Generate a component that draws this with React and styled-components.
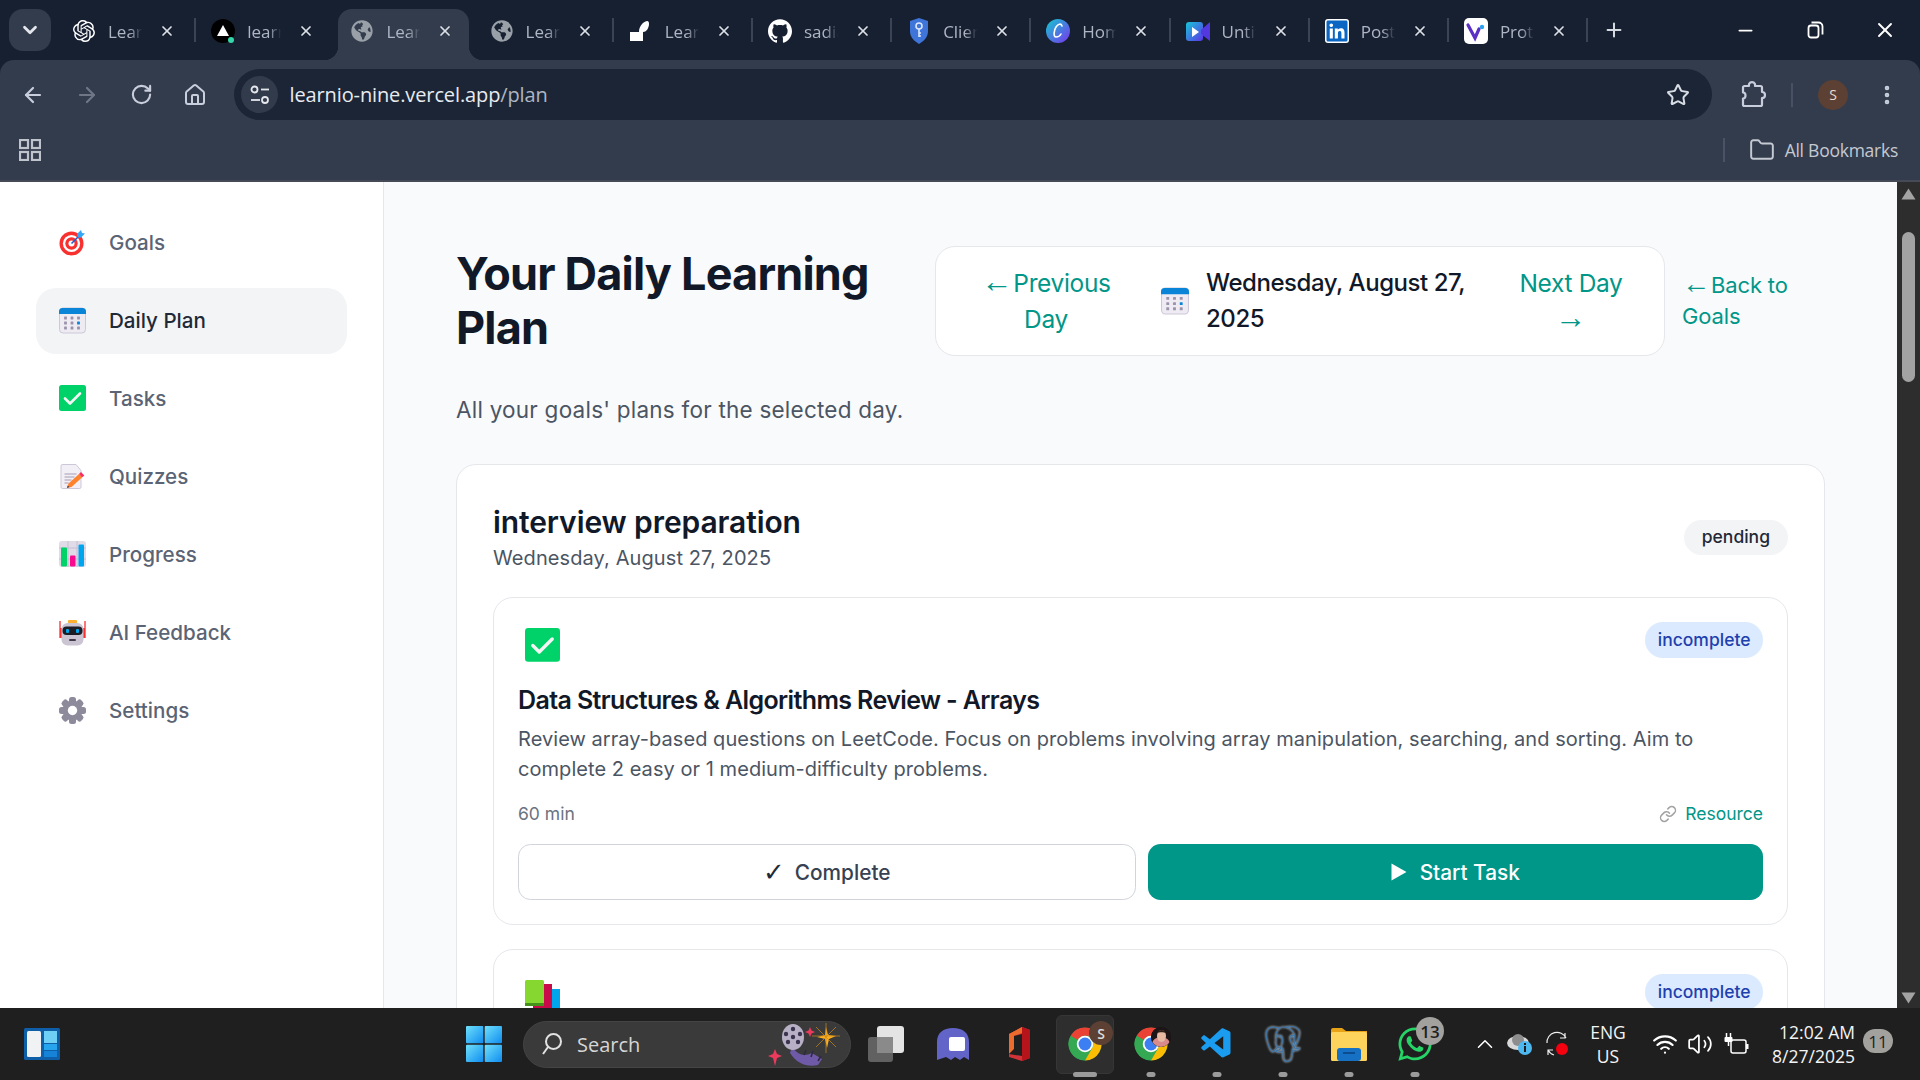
import React from "react";
import styled, { createGlobalStyle } from "styled-components";
import { ArrowLeft, ArrowRight, RotateCw, House, Star, EllipsisVertical, Folder, Plus, X, Minus, ChevronDown, Link as LinkIcon, ChevronUp, Wifi, Volume2 } from "lucide-react";
import { SiOpenai, SiGithub, SiPostgresql } from "react-icons/si";
import { FaGlobeAmericas, FaWhatsapp, FaLinkedin } from "react-icons/fa";
import { VscVscode } from "react-icons/vsc";

const UI = `"Inter", "Noto Sans", sans-serif`;
const SYS = `"Open Sans", "Noto Sans", sans-serif`;
const TEAL = "#009688";

const Global = createGlobalStyle`
  html, body { margin: 0; padding: 0; overflow: hidden; background: #fff; }
  * { box-sizing: border-box; }
  #root { height: 1080px; }
`;

const Screen = styled.div`
  width: 1920px; height: 1080px; display: flex; flex-direction: column; overflow: hidden; font-family: ${UI};
`;

const TabStrip = styled.div`
  height: 60px; flex: none; background: #172031; display: flex; align-items: flex-start; padding-left: 9px; font-family: ${SYS};
`;
const TabMenu = styled.div`
  width: 42px; height: 42px; margin: 9px 9px 0 0; border-radius: 14px; background: #333c4d; color: #e4e7ec;
  display: flex; align-items: center; justify-content: center;
`;
const Tab = styled.div`
  position: relative; width: ${p => (p.$active ? "131px" : "139.2px")}; margin-right: ${p => (p.$active ? "8.2px" : "0")};
  height: 51px; margin-top: 9px; padding: 0 0 7px 12px; display: flex; align-items: center; flex: none;
  background: ${p => (p.$active ? "#333c4d" : "transparent")}; border-radius: 14px 14px 0 0;
  ${p => p.$active && `
    &::before, &::after { content: ""; position: absolute; bottom: 0; width: 14px; height: 14px; }
    &::before { left: -14px; background: radial-gradient(circle at 0 0, transparent 14px, #333c4d 14.5px); }
    &::after { right: -14px; background: radial-gradient(circle at 100% 0, transparent 14px, #333c4d 14.5px); }
  `}
  ${p => p.$sep && `
    &::after { content: ""; position: absolute; right: 3px; top: 9px; width: 2px; height: 24px; background: #3b4455; }
  `}
`;
const FavSlot = styled.span`
  width: 24px; height: 24px; flex: none; display: flex; align-items: center; justify-content: center; position: relative;
`;
const TabTitle = styled.span`
  width: 36px; margin: 0 15px 0 12px; font-size: 17px; color: #aeb5c3; white-space: nowrap; overflow: hidden; flex: none;
  -webkit-mask-image: linear-gradient(90deg, #000 60%, transparent 95%); mask-image: linear-gradient(90deg, #000 60%, transparent 95%);
`;
const TabClose = styled(X)` color: #dde0e6; flex: none; `;
const NewTab = styled(Plus)` color: #d5d9e0; margin: 19px 0 0 12px; flex: none; `;
const WinControls = styled.div`
  margin-left: auto; display: flex; align-items: flex-start; color: #fff;
`;
const WinButton = styled.div`
  width: 70px; height: 60px; display: flex; align-items: center; justify-content: center;
`;

const Toolbar = styled.div`
  height: 60px; flex: none; background: #333c4d; border-radius: 14px 14px 0 0;
  display: flex; align-items: flex-start; padding: 9px 0 0 6px;
`;
const ToolStripBack = styled.div` background: #172031; flex: none; `;
const NavSlot = styled.div`
  width: 54px; height: 51px; flex: none; display: flex; align-items: center; justify-content: center;
  color: ${p => (p.$dim ? "#6f7787" : "#c8cedb")};
`;
const Omnibox = styled.div`
  width: 1478px; height: 51px; margin-left: 12px; background: #1b2536; border-radius: 26px; flex: none;
  display: flex; align-items: center; padding: 0 22px 0 7px; color: #fff; font-family: ${SYS}; font-size: 20px;
`;
const SiteChip = styled.div`
  width: 37px; height: 37px; border-radius: 50%; background: #323b4b; display: flex; align-items: center; justify-content: center; flex: none; margin-right: 11px;
`;
const UrlHost = styled.span` color: #e8ebf0; letter-spacing: -0.12px; margin-left: 0.5px; `;
const UrlPath = styled.span` color: #aeb5c3; letter-spacing: -0.12px; `;
const StarWrap = styled.div` margin-left: auto; color: #d8dce3; display: flex; `;
const ToolSlot = styled.div`
  width: ${p => p.$w}px; margin-left: ${p => p.$ml || 0}px; height: 51px; flex: none; display: flex; align-items: center; justify-content: center; color: #c8cedb;
`;
const ToolSep = styled.div` width: 2px; height: 24px; background: #485164; `;
const Avatar = styled.div`
  width: 30px; height: 30px; border-radius: 50%; background: #5c4033; color: #e8dcd5; font: 14px ${SYS}; display: flex; align-items: center; justify-content: center;
`;

const BookmarkBar = styled.div`
  height: 62px; flex: none; background: #333c4d; border-bottom: 2px solid #454a56; display: flex; align-items: center; padding: 0 22px 0 19px; color: #c5c9d2; font-family: ${SYS};
`;
const BarSep = styled.div` width: 2px; height: 24px; background: #4a5365; margin-left: auto; `;
const AllBookmarks = styled.span` font-size: 17.5px; margin-left: 10px; letter-spacing: -0.25px; `;
const FolderIcon = styled(Folder)` margin-left: 24px; `;

const Body = styled.div` flex: 1; min-height: 0; display: flex; `;
const Sidebar = styled.nav`
  width: 384px; flex: none; background: #fff; border-right: 1px solid #e5e7eb; padding: 28px 36px 0; display: flex; flex-direction: column; gap: 12px;
`;
const SideItem = styled.div`
  width: 311px; height: 66px; border-radius: 20px; padding-left: 23px; display: flex; align-items: center; gap: 23px;
  font-size: 20.6px; font-weight: 500; color: ${p => (p.$active ? "#1f2937" : "#5b6474")}; background: ${p => (p.$active ? "#f3f4f6" : "transparent")};
`;
const SideLabel = styled.span` margin-top: -2px; `;
const SideGlyph = styled.span` display: flex; margin-top: -1px; `;
const Main = styled.main`
  flex: 1; min-width: 0; background: #f9fafb; padding: 64px 72px 0; overflow: hidden;
`;
const Header = styled.header` display: flex; align-items: center; `;
const Title = styled.h1`
  width: 479px; flex: none; margin: 0; font-size: 45px; line-height: 54px; font-weight: 700; color: #111827; letter-spacing: -0.8px;
`;
const NavCard = styled.div`
  width: 730px; height: 110px; flex: none; background: #fff; border: 1px solid #e5e7eb; border-radius: 20px; padding: 0 24px;
  display: flex; align-items: center;
`;
const DayLink = styled.a`
  width: ${p => p.$w}px; padding: 0 ${p => p.$pad || 0}px; text-align: center; font-size: 24.5px; line-height: 36px; color: ${TEAL}; flex: none; letter-spacing: -0.35px;
`;
const Arrow = styled.span` font-family: "Liberation Sans", sans-serif; font-size: 1.28em; line-height: 1px; margin-right: 1px; `;
const DateBlock = styled.div`
  width: 315px; margin-left: 29px; margin-right: 24px; flex: none; display: flex; align-items: center; gap: 17px;
  font-size: 24px; line-height: 36px; font-weight: 500; color: #111827; letter-spacing: -0.45px;
  svg { flex: none; }
`;
const BackLink = styled.a`
  flex: 1; margin-left: 17px; font-size: 22px; line-height: 31px; color: ${TEAL}; letter-spacing: -0.15px;
`;
const Subtitle = styled.p` margin: 39px 0; font-size: 22.5px; line-height: 30px; color: #4b5563; letter-spacing: 0.23px; `;
const GoalCard = styled.section`
  background: #fff; border: 1px solid #e5e7eb; border-radius: 20px; padding: 37px 36px 36px;
`;
const GoalHead = styled.div` display: flex; align-items: center; justify-content: space-between; margin-bottom: 24px; `;
const GoalTitle = styled.h2` margin: 0; font-size: 30px; line-height: 40px; font-weight: 600; color: #111827; letter-spacing: -0.1px; `;
const GoalDate = styled.div` font-size: 20px; line-height: 30px; color: #4b5563; letter-spacing: 0.1px; margin-top: 1px; `;
const Pill = styled.span`
  height: ${p => p.$h}px; padding: 0 ${p => p.$px}px 2px; border-radius: 20px; font-size: 17.5px; font-weight: 500; display: inline-flex; align-items: center; flex: none;
  background: ${p => p.$bg}; color: ${p => p.$fg};
`;
const TaskCard = styled.article`
  background: #fff; border: 1px solid #e5e7eb; border-radius: 20px; padding: 24px; margin-bottom: 24px;
`;
const TaskTop = styled.div` display: flex; justify-content: space-between; align-items: flex-start; height: 61px; `;
const TaskEmoji = styled.div` padding: 6px 0 0 7px; display: flex; `;
const TaskTitle = styled.h3` margin: 0; font-size: 25px; line-height: 35px; font-weight: 600; color: #111827; letter-spacing: -0.62px; `;
const TaskDesc = styled.p` margin: 6px 0 0; font-size: 20px; line-height: 30px; color: #4b5563; letter-spacing: 0.05px; `;
const TaskMeta = styled.div`
  margin-top: 17px; height: 25px; display: flex; align-items: center; justify-content: space-between; font-size: 17.5px; color: #6b7280;
`;
const Resource = styled.a` display: flex; align-items: center; gap: 8px; color: ${TEAL}; `;
const ChainIcon = styled(LinkIcon)` color: #a3a3a3; `;
const Actions = styled.div` display: flex; gap: 12px; margin-top: 18px; `;
const CompleteBtn = styled.button`
  flex: 1; height: 56px; border: 1px solid #d1d5db; background: #fff; border-radius: 12.5px; font: 500 20.8px ${UI}; color: #374151;
  display: flex; align-items: center; justify-content: center; gap: 10px;
`;
const CheckGlyph = styled.span` font: 400 26px "DejaVu Sans", sans-serif; color: #1f2937; `;
const StartBtn = styled(CompleteBtn)`
  border: 0; background: ${TEAL}; color: #fff; gap: 13px;
`;

const ScrollTrack = styled.div`
  width: 23px; flex: none; background: #2d2d2d; display: flex; flex-direction: column; align-items: center; padding: 6px 0 4px;
`;
const ScrollThumb = styled.div` width: 13px; height: 150px; margin-top: 32px; margin-bottom: auto; border-radius: 7px; background: #a3a3a3; `;

const Taskbar = styled.footer`
  height: 72px; flex: none; background: #1f1f1f; display: flex; align-items: center; padding-left: 24px; font-family: ${SYS}; color: #f2f2f2;
`;
const StartSlot = styled.div` margin-left: 406px; margin-right: 21px; display: flex; `;
const SearchBox = styled.div`
  width: 328px; height: 47px; flex: none; background: #3a3a3a; border: 1px solid #444; border-radius: 24px; display: flex; align-items: center; padding: 0 8px 0 17px; gap: 14px;
  font-size: 20px; color: #d6d6d6; margin-right: 3px;
`;
const Film = styled.svg` margin-left: auto; `;
const TaskSlot = styled.div`
  position: relative; width: 66px; height: 72px; flex: none; display: flex; align-items: center; justify-content: center;
  ${p => p.$active && `
    &::before { content: ""; position: absolute; left: 4px; right: 4px; top: 7px; bottom: 6px; background: #2e2e2e; border-radius: 6px; border: 1px solid #363636; }
    & > * { position: relative; }
  `}
`;
const Dot = styled.span`
  position: absolute !important; bottom: 3px; left: 50%; transform: translateX(-50%); width: ${p => (p.$wide ? 24 : 9)}px; height: 5px; border-radius: 3px; background: #9b9b9b;
`;
const Badge = styled.span`
  position: absolute !important; display: flex; align-items: center; justify-content: center; border-radius: 50%; top: ${p => p.$top}px; left: ${p => p.$left}px;
  width: ${p => p.$size}px; height: ${p => p.$size}px; background: ${p => p.$bg}; color: ${p => p.$fg}; font-size: ${p => p.$fs}px; font-weight: 600; overflow: hidden;
`;
const PgIcon = styled(SiPostgresql)` filter: drop-shadow(0 0 0.8px #dbe8f3); `;
const Tray = styled.div` display: flex; align-items: center; margin-left: 20px; height: 72px; `;
const TraySlot = styled.div`
  width: ${p => p.$w}px; margin-left: ${p => p.$ml || 0}px; flex: none; display: flex; align-items: center; justify-content: center; color: #fff;
`;
const TwoLine = styled.div`
  width: ${p => p.$w}px; flex: none; display: flex; flex-direction: column; align-items: ${p => p.$align}; padding-right: ${p => p.$pr || 0}px; font-size: 17.5px; line-height: 24px; color: #f4f4f4;
`;
const NotifPill = styled.div`
  width: 30px; height: 24px; margin: -6px 0 0 4px; border-radius: 12px; background: #a3a19e; color: #1f1f1f; font-size: 17px; display: flex; align-items: center; justify-content: center; flex: none;
`;

/* ---------- drawn icons ---------- */
const ChromeLogo = ({ size = 36 }) => {
  const seg = "M24 2A22 22 0 0 1 43.05 13H24a11 11 0 0 0-9.53 5.5L4.95 13A22 22 0 0 1 24 2z";
  return (
    <svg width={size} height={size} viewBox="0 0 48 48">
      <circle cx="24" cy="24" r="21.8" fill="#34a853" />
      <path d={seg} fill="#ea4335" />
      <path d={seg} fill="#fbbc04" transform="rotate(120 24 24)" />
      <path d={seg} fill="#34a853" transform="rotate(240 24 24)" />
      <circle cx="24" cy="24" r="11" fill="#fff" />
      <circle cx="24" cy="24" r="8.6" fill="#3b7ff2" />
    </svg>
  );
};
const TargetIcon = () => (
  <svg width="27" height="27" viewBox="0 0 27 27">
    <circle cx="12.5" cy="14.5" r="12" fill="#f8312f" />
    <circle cx="12.5" cy="14.5" r="8.6" fill="#fff" />
    <circle cx="12.5" cy="14.5" r="6.2" fill="#f8312f" />
    <circle cx="12.5" cy="14.5" r="3" fill="#fff" />
    <path d="M12.5 14.5L21 6" stroke="#1c5cd7" strokeWidth="1.6" />
    <path d="M18 5l4-4 1 3 3 .6-4 4-3.4-.2z" fill="#35a6f5" />
  </svg>
);
const CalendarIcon = ({ w = 27, h = 27 }) => (
  <svg width={w} height={h} viewBox="0 0 27 27">
    <rect x="0.5" y="1" width="26" height="25" rx="3.5" fill="#efebf3" stroke="#cdc7d8" />
    <path d="M0 7V4.5A3.5 3.5 0 0 1 3.5 1h20A3.5 3.5 0 0 1 27 4.5V7z" fill="#0a84d6" />
    {[11, 16, 21].map(y => [6.5, 13, 19.5].map(x => (
      <rect key={`${x}${y}`} x={x - 1.4} y={y - 1.4} width="2.8" height="2.8" rx="0.5" fill={x === 19.5 && y === 16 ? "#0a84d6" : "#9b92ab"} />
    )))}
  </svg>
);
const CheckIcon = ({ size = 27 }) => (
  <svg width={size} height={size} viewBox="0 0 27 27">
    <rect width="27" height="26" rx="2.5" fill="#00d26a" />
    <path d="M6 13.5l5 5 10-10" fill="none" stroke="#f4f4f4" strokeWidth="2.6" strokeLinecap="round" strokeLinejoin="round" />
  </svg>
);
const MemoIcon = () => (
  <svg width="27" height="27" viewBox="0 0 27 27">
    <path d="M3 1.5h14l5 6V24a1.5 1.5 0 0 1-1.5 1.5h-17A1.5 1.5 0 0 1 2 24V3A1.5 1.5 0 0 1 3 1.5z" fill="#f3eff6" stroke="#cdc7d8" />
    <path d="M5.5 11h12M5.5 14h10M5.5 17h7M5.5 20h4" stroke="#a49bb3" strokeWidth="1" />
    <path d="M8 25l1.5-4.5L20 11l3 3.5L12.5 24z" fill="#ff822d" />
    <path d="M20 11l2-2 3.3 3.4-2.3 2.1z" fill="#f92f60" />
    <path d="M8 25l.7-2.5 1.8 1.6z" fill="#433b4b" />
  </svg>
);
const BarsIcon = () => (
  <svg width="27" height="27" viewBox="0 0 27 27">
    <rect width="27" height="26" rx="3" fill="#e1dbe8" />
    <path d="M9 0v26M18 0v26M0 7h27M0 18h27" stroke="#c6bed2" strokeWidth="1" />
    <rect x="2" y="6.5" width="6" height="19" rx="1" fill="#00d26a" />
    <rect x="11" y="14.5" width="5.5" height="11" rx="1" fill="#f70a8d" />
    <rect x="19.5" y="3.5" width="5.5" height="22" rx="1" fill="#00a6ed" />
  </svg>
);
const RobotIcon = () => (
  <svg width="27" height="27" viewBox="0 0 27 27">
    <rect x="9" y="1" width="9" height="3.5" rx="1" fill="#ffb02e" />
    <path d="M1 2v17M26 2v17" stroke="#f8312f" strokeWidth="1.3" />
    <rect x="1" y="9" width="2.5" height="10" fill="#f8312f" /><rect x="23.5" y="9" width="2.5" height="10" fill="#f8312f" />
    <rect x="2.5" y="4" width="22" height="22.5" rx="6" fill="#cbc5d3" />
    <rect x="3.5" y="7.5" width="20" height="8.5" rx="4" fill="#1c1c24" />
    <rect x="7" y="10" width="3" height="4" rx="1" fill="#00a6ed" /><rect x="17" y="10" width="3" height="4" rx="1" fill="#00a6ed" />
    <rect x="10" y="20" width="7" height="2" rx="1" fill="#433b4b" />
  </svg>
);
const GearIcon = () => (
  <svg width="27" height="27" viewBox="0 0 27 27">
    <g fill="#8d8a9c">
      {[0, 45, 90, 135].map(a => <rect key={a} x="10" y="0" width="7" height="27" rx="2.5" transform={`rotate(${a} 13.5 13.5)`} />)}
      <circle cx="13.5" cy="13.5" r="10" />
    </g>
    <circle cx="13.5" cy="13.5" r="4.7" fill="#fff" />
  </svg>
);
const BooksIcon = () => (
  <svg width="35" height="30" viewBox="0 0 35 30">
    <rect x="23" y="9" width="12" height="21" fill="#00a6ed" />
    <rect x="14" y="4" width="13" height="26" fill="#ca0b4a" />
    <rect x="0" y="0" width="19" height="26" rx="1.5" fill="#86d72f" />
    <rect x="0" y="23" width="19" height="3" fill="#44911b" />
    <rect x="8" y="26" width="12" height="4" fill="#ca0b4a" />
  </svg>
);
const TuneIcon = () => (
  <svg width="22" height="22" viewBox="0 0 22 22" fill="none" stroke="#e4e7ec" strokeWidth="1.8">
    <circle cx="5.5" cy="5.5" r="3" /><path d="M12 5.5h8" />
    <circle cx="16" cy="16" r="3" /><path d="M2 16h9" />
  </svg>
);
const PuzzleIcon = () => (
  <svg width="26" height="30" viewBox="0 0 26 30" fill="none" stroke="#c8cedb" strokeWidth="2.2" strokeLinejoin="round">
    <path d="M9 6c-.2-1.4.1-3.8 3-3.8s3.2 2.4 3 3.8h5.5a1.5 1.5 0 0 1 1.5 1.5v4.5c2.5 0 3 1.8 3 3s-.5 3-3 3v6.5a1.5 1.5 0 0 1-1.5 1.5H4.5A1.5 1.5 0 0 1 3 24.5v-6c2 0 2.5-1.5 2.5-3s-.5-3-2.5-3v-5A1.5 1.5 0 0 1 4.5 6z" />
  </svg>
);
const RestoreIcon = () => (
  <svg width="17" height="18" viewBox="0 0 17 18" fill="none" stroke="#fff" strokeWidth="1.8">
    <rect x="1.5" y="4.5" width="10" height="12" rx="2.5" /><path d="M4.5 1.5h7a4 4 0 0 1 4 4v8" />
  </svg>
);
const AppsGrid = () => (
  <svg width="22" height="22" viewBox="0 0 22 22" fill="none" stroke="#bfc3cc" strokeWidth="2.2">
    <rect x="1" y="1" width="8" height="8" /><rect x="13" y="1" width="8" height="8" /><rect x="1" y="13" width="8" height="8" /><rect x="13" y="13" width="8" height="8" />
  </svg>
);
const VercelFav = () => (
  <svg width="24" height="24" viewBox="0 0 24 24">
    <circle cx="12" cy="12" r="12" fill="#000" />
    <path d="M12 6l6 11H6z" fill="#fff" />
    <circle cx="20" cy="21" r="3" fill="#35d6a8" />
  </svg>
);
const SlashFav = () => (
  <svg width="24" height="24" viewBox="0 0 24 24" fill="#fff">
    <path d="M1 13h9v9H1zM10 13c0-6 4-10 8-11 2 0 2 2 2 3 0 3-2 8-6 8v9h-4z" />
  </svg>
);
const ShieldFav = () => (
  <svg width="24" height="26" viewBox="0 0 24 26">
    <path d="M12 0l9 3v10c0 6-4 10-9 13C7 23 3 19 3 13V3z" fill="#3f74d9" />
    <circle cx="12" cy="8" r="3" fill="none" stroke="#dbe6fb" strokeWidth="1.6" />
    <path d="M12 11v8M12 15h2M12 18h2" stroke="#dbe6fb" strokeWidth="1.6" />
  </svg>
);
const CanvaFav = () => (
  <svg width="24" height="26" viewBox="0 0 24 26">
    <defs><linearGradient id="cv" x1="0" y1="0" x2="1" y2="1"><stop offset="0" stopColor="#14cad0" /><stop offset="1" stopColor="#7a33ee" /></linearGradient></defs>
    <circle cx="12" cy="13" r="12" fill="url(#cv)" />
    <path d="M16 8c-1-3-4-2-6 1s-3 10 0 10c2 0 4-1 5-3" fill="none" stroke="#fff" strokeWidth="1.6" strokeLinecap="round" />
  </svg>
);
const VideoFav = () => (
  <svg width="24" height="24" viewBox="0 0 24 24">
    <defs><linearGradient id="vd" x1="0" y1="0" x2="1" y2="1"><stop offset="0" stopColor="#16c6d8" /><stop offset="1" stopColor="#5d35e8" /></linearGradient></defs>
    <rect x="0" y="3" width="17" height="19" rx="3" fill="url(#vd)" />
    <path d="M15 11l9-8v19l-9-7z" fill="#5338e0" />
    <path d="M6 8l7 5-7 5z" fill="#fff" />
  </svg>
);
const YFav = () => (
  <svg width="24" height="26" viewBox="0 0 24 26">
    <rect width="24" height="26" rx="5" fill="#fff" />
    <path d="M4 7l7 13 4-9" fill="none" stroke="#5a2fc4" strokeWidth="3.2" strokeLinecap="round" />
    <circle cx="18" cy="9" r="2.2" fill="#2aa3ef" />
  </svg>
);
const WindowsLogo = () => (
  <svg width="36" height="36" viewBox="0 0 36 36">
    <defs><linearGradient id="ws" x1="0" y1="0" x2="1" y2="1"><stop offset="0" stopColor="#6fe0fb" /><stop offset="1" stopColor="#0f8cf0" /></linearGradient></defs>
    <rect x="0" y="0" width="17.3" height="17.3" rx="1" fill="url(#ws)" />
    <rect x="18.7" y="0" width="17.3" height="17.3" rx="1" fill="url(#ws)" />
    <rect x="0" y="18.7" width="17.3" height="17.3" rx="1" fill="url(#ws)" />
    <rect x="18.7" y="18.7" width="17.3" height="17.3" rx="1" fill="url(#ws)" />
  </svg>
);
const WidgetsIcon = () => (
  <svg width="36" height="32" viewBox="0 0 36 32">
    <rect width="36" height="32" rx="1.5" fill="#0f5fa8" />
    <rect x="3" y="3" width="14" height="26" rx="1.5" fill="#f0f2f4" />
    <rect x="20" y="3" width="13" height="12" fill="#6fd0f5" />
    <rect x="20" y="16" width="13" height="6" fill="#26a5ee" />
    <rect x="20" y="23" width="13" height="6" fill="#1683d8" />
  </svg>
);
const FilmArt = () => (
  <Film width="76" height="46" viewBox="0 0 76 46">
    <path d="M26 26c6 8 12 10 20 6l10 6-4 6c-10 2-20 0-28-12z" fill="#6f5aa8" />
    <path d="M38 34l2-5M45 36l2-6M52 40l3-5" stroke="#2f2a45" strokeWidth="1.6" />
    <ellipse cx="27" cy="16" rx="11" ry="13" fill="#b8b1c6" />
    {[[27, 8], [20, 13], [34, 13], [22, 21], [32, 21], [27, 16]].map(([x, y]) => <circle key={`${x}${y}`} cx={x} cy={y} r="2.2" fill="#3a3450" />)}
    <path d="M60 6l2 8 8 1-7 3-2 9-2-9-8-2 8-2z" fill="#ffb020" />
    <path d="M60 2v30M46 15h28M50 6l20 20M70 6L50 26" stroke="#c98a1e" strokeWidth="0.7" />
    <path d="M44 6l1.5 3.5L49 11l-3.5 1.5L44 16l-1.5-3.5L39 11l3.5-1.5z" fill="#ec3a5d" />
    <path d="M9 28l2 5 5 2-5 2-2 8-2-8-5-2 5-2z" fill="#ec3a5d" />
  </Film>
);
const TaskViewIcon = () => (
  <svg width="38" height="36" viewBox="0 0 38 36">
    <rect x="0" y="11" width="25" height="25" rx="3" fill="#616161" />
    <rect x="9" y="0" width="27" height="27" rx="3" fill="#e4e4e4" />
    <rect x="9" y="11" width="16" height="16" fill="#8a8a8a" />
  </svg>
);
const TeamsIcon = () => (
  <svg width="36" height="36" viewBox="0 0 36 36">
    <path d="M2 34V16C2 7 8 2 18 2s16 5 16 14v18l-5-3-4 3-5-3-4 3-5-3z" fill="#6264c7" />
    <rect x="14" y="11" width="16" height="14" rx="2" fill="#fff" />
  </svg>
);
const OfficeIcon = () => (
  <svg width="24" height="34" viewBox="0 0 24 34">
    <path d="M15 0l8 3v28l-8 3-13-4V7z" fill="#d13438" />
    <path d="M15 0v6L7 9v13l-5 5V7z" fill="#eb6c2d" />
    <path d="M7 9l8-2v22l-13-2 5-5z" fill="#1f1f1f" />
    <path d="M15 0l8 3v28l-8 3z" fill="#b5141b" />
  </svg>
);
const FolderApp = () => (
  <svg width="36" height="34" viewBox="0 0 36 34">
    <path d="M0 3a2 2 0 0 1 2-2h9l4 3h21v5H0z" fill="#e8a317" />
    <rect x="0" y="5" width="36" height="29" rx="1.5" fill="#ffd45c" />
    <rect x="6" y="21" width="24" height="13" rx="3" fill="#1670c4" />
    <rect x="12" y="25" width="12" height="2" fill="#0b4d90" />
  </svg>
);
const OneDriveIcon = () => (
  <svg width="26" height="22" viewBox="0 0 26 22">
    <ellipse cx="11" cy="10" rx="11" ry="7" fill="#d8d8d8" />
    <ellipse cx="11" cy="7" rx="6" ry="6" fill="#8d8d8d" />
    <circle cx="18" cy="15" r="7" fill="#4db7f0" />
    <rect x="17" y="13" width="2" height="6" fill="#1f1f1f" /><rect x="17" y="10" width="2" height="2" fill="#1f1f1f" />
  </svg>
);
const SyncIcon = () => (
  <svg width="26" height="26" viewBox="0 0 26 26" fill="none" stroke="#f0f0f0" strokeWidth="1.2">
    <path d="M3 12A10 10 0 0 1 22 7M21 2v5h-5M4 24v-5h5M4 19a10 10 0 0 0 6 5" />
    <circle cx="18" cy="18" r="6" fill="#f4000f" stroke="none" />
  </svg>
);
const BatteryIcon = () => (
  <svg width="26" height="22" viewBox="0 0 26 22" fill="none" stroke="#fff" strokeWidth="1.5">
    <rect x="7" y="7" width="15" height="13" rx="2" />
    <rect x="22" y="11" width="2.5" height="5" fill="#fff" stroke="none" />
    <rect x="0.5" y="4" width="8" height="5" rx="1" fill="#fff" stroke="none" />
    <path d="M2.5 0v4M6.5 0v4" /><path d="M4.5 9v4" />
  </svg>
);
const SearchGlass = () => (
  <svg width="22" height="24" viewBox="0 0 22 24" fill="none" stroke="#e2e2e2" strokeWidth="2">
    <circle cx="12.5" cy="9.5" r="7.5" /><path d="M7 15l-5 7" />
  </svg>
);
const PlayIcon = () => (
  <svg width="16" height="18" viewBox="0 0 16 18"><path d="M0.5 0.5L15.5 9 0.5 17.5z" fill="#fff" /></svg>
);
const Portrait = () => (
  <svg width="20" height="20" viewBox="0 0 20 20">
    <rect width="20" height="20" fill="#1c1416" />
    <ellipse cx="10" cy="17" rx="9" ry="7" fill="#d98a8a" />
    <ellipse cx="10.5" cy="9" rx="4.5" ry="6" fill="#e7b9a2" />
    <path d="M6 6c1-4 8-4 9 0-2-1-7-1-9 0z" fill="#2b1d1a" />
  </svg>
);

const tabs = [
  { t: "Learnio", i: <SiOpenai size={22} color="#fff" />, sep: true },
  { t: "learnio", i: <VercelFav /> },
  { t: "Learnio", i: <FaGlobeAmericas size={22} color="#9aa0a8" />, active: true },
  { t: "Learnio", i: <FaGlobeAmericas size={22} color="#9aa0a8" />, sep: true },
  { t: "Learnio", i: <SlashFav />, sep: true },
  { t: "sadia", i: <SiGithub size={24} color="#fff" />, sep: true },
  { t: "Client", i: <ShieldFav />, sep: true },
  { t: "Home", i: <CanvaFav />, sep: true },
  { t: "Untitled", i: <VideoFav />, sep: true },
  { t: "Post", i: <FaLinkedin size={24} color="#0a66c2" style={{ background: "#fff", borderRadius: 3 }} />, sep: true },
  { t: "Protect", i: <YFav />, sep: true },
];

const navItems = [
  ["Goals", <TargetIcon />], ["Daily Plan", <CalendarIcon />, true], ["Tasks", <CheckIcon />], ["Quizzes", <MemoIcon />],
  ["Progress", <BarsIcon />], ["AI Feedback", <RobotIcon />], ["Settings", <GearIcon />],
];

const Triangle = ({ up }) => (
  <svg width="15" height="12" viewBox="0 0 15 12"><path d={up ? "M7.5 0.5L14.5 11.5H0.5z" : "M7.5 11.5L14.5 0.5H0.5z"} fill="#a3a3a3" /></svg>
);

export default function App() {
  return (
    <Screen>
      <Global />
      <TabStrip>
        <TabMenu><ChevronDown size={22} strokeWidth={3} /></TabMenu>
        {tabs.map((x, n) => (
          <Tab key={n} $active={x.active} $sep={x.sep}>
            <FavSlot>{x.i}</FavSlot>
            <TabTitle>{x.t}</TabTitle>
            <TabClose size={16} strokeWidth={2.6} />
          </Tab>
        ))}
        <NewTab size={22} strokeWidth={2.2} />
        <WinControls>
          <WinButton><Minus size={21} strokeWidth={2} /></WinButton>
          <WinButton><RestoreIcon /></WinButton>
          <WinButton><X size={24} strokeWidth={1.9} /></WinButton>
        </WinControls>
      </TabStrip>
      <ToolStripBack>
        <Toolbar>
          <NavSlot><ArrowLeft size={24} strokeWidth={2.2} /></NavSlot>
          <NavSlot $dim><ArrowRight size={24} strokeWidth={2.2} /></NavSlot>
          <NavSlot><RotateCw size={23} strokeWidth={2.2} /></NavSlot>
          <NavSlot><House size={24} strokeWidth={2} /></NavSlot>
          <Omnibox>
            <SiteChip><TuneIcon /></SiteChip>
            <UrlHost>learnio-nine.vercel.app</UrlHost><UrlPath>/plan</UrlPath>
            <StarWrap><Star size={24} strokeWidth={2} /></StarWrap>
          </Omnibox>
          <ToolSlot $w={50} $ml={16}><PuzzleIcon /></ToolSlot>
          <ToolSlot $w={2} $ml={13}><ToolSep /></ToolSlot>
          <ToolSlot $w={30} $ml={25}><Avatar>S</Avatar></ToolSlot>
          <ToolSlot $w={30} $ml={24}><EllipsisVertical size={24} strokeWidth={2.6} /></ToolSlot>
        </Toolbar>
      </ToolStripBack>
      <BookmarkBar>
        <AppsGrid />
        <BarSep />
        <FolderIcon size={26} strokeWidth={1.8} />
        <AllBookmarks>All Bookmarks</AllBookmarks>
      </BookmarkBar>

      <Body>
        <Sidebar>
          {navItems.map(([label, icon, active]) => (
            <SideItem key={label} $active={active}><SideGlyph>{icon}</SideGlyph><SideLabel>{label}</SideLabel></SideItem>
          ))}
        </Sidebar>
        <Main>
          <Header>
            <Title>Your Daily Learning Plan</Title>
            <NavCard>
              <DayLink $w={172}><Arrow>←</Arrow>Previous Day</DayLink>
              <DateBlock>
                <CalendarIcon w={28} h={28} />
                <span>Wednesday, August 27, 2025</span>
              </DateBlock>
              <DayLink $w={142} $pad={16}>Next Day <Arrow>→</Arrow></DayLink>
            </NavCard>
            <BackLink><Arrow>←</Arrow>Back to<br />Goals</BackLink>
          </Header>
          <Subtitle>All your goals' plans for the selected day.</Subtitle>
          <GoalCard>
            <GoalHead>
              <div>
                <GoalTitle>interview preparation</GoalTitle>
                <GoalDate>Wednesday, August 27, 2025</GoalDate>
              </div>
              <Pill $h={35} $px={18} $bg="#f3f4f6" $fg="#1f2937">pending</Pill>
            </GoalHead>
            <TaskCard>
              <TaskTop>
                <TaskEmoji><CheckIcon size={35} /></TaskEmoji>
                <Pill $h={36} $px={12.5} $bg="#dbeafe" $fg="#1e40af">incomplete</Pill>
              </TaskTop>
              <TaskTitle>Data Structures &amp; Algorithms Review - Arrays</TaskTitle>
              <TaskDesc>Review array-based questions on LeetCode. Focus on problems involving array manipulation, searching, and sorting. Aim to complete 2 easy or 1 medium-difficulty problems.</TaskDesc>
              <TaskMeta>
                <span>60 min</span>
                <Resource><ChainIcon size={18} />Resource</Resource>
              </TaskMeta>
              <Actions>
                <CompleteBtn><CheckGlyph>✓</CheckGlyph>Complete</CompleteBtn>
                <StartBtn><PlayIcon />Start Task</StartBtn>
              </Actions>
            </TaskCard>
            <TaskCard>
              <TaskTop>
                <TaskEmoji><BooksIcon /></TaskEmoji>
                <Pill $h={36} $px={12.5} $bg="#dbeafe" $fg="#1e40af">incomplete</Pill>
              </TaskTop>
            </TaskCard>
          </GoalCard>
        </Main>
        <ScrollTrack>
          <Triangle up />
          <ScrollThumb />
          <Triangle />
        </ScrollTrack>
      </Body>

      <Taskbar>
        <WidgetsIcon />
        <StartSlot><WindowsLogo /></StartSlot>
        <SearchBox><SearchGlass />Search<FilmArt /></SearchBox>
        <TaskSlot><TaskViewIcon /></TaskSlot>
        <TaskSlot><TeamsIcon /></TaskSlot>
        <TaskSlot><OfficeIcon /></TaskSlot>
        <TaskSlot $active><ChromeLogo /><Badge $top={13} $left={37} $size={24} $bg="#5c4033" $fg="#ddd" $fs={14}>S</Badge><Dot $wide /></TaskSlot>
        <TaskSlot><ChromeLogo /><Badge $top={19} $left={33} $size={20} $bg="#1c1416"><Portrait /></Badge><Dot /></TaskSlot>
        <TaskSlot><VscVscode size={36} color="#1a9cf0" /><Dot /></TaskSlot>
        <TaskSlot><PgIcon size={36} color="#3f75a6" /><Dot /></TaskSlot>
        <TaskSlot><FolderApp /><Dot /></TaskSlot>
        <TaskSlot><FaWhatsapp size={38} color="#25d366" /><Badge $top={9} $left={34} $size={28} $bg="#a3a19e" $fg="#1f1f1f" $fs={17}>13</Badge><Dot /></TaskSlot>
        <Tray>
          <TraySlot $w={34}><ChevronUp size={26} strokeWidth={1.4} /></TraySlot>
          <TraySlot $w={36}><OneDriveIcon /></TraySlot>
          <TraySlot $w={38}><SyncIcon /></TraySlot>
          <TwoLine $w={64} $align="center"><span>ENG</span><span>US</span></TwoLine>
          <TraySlot $w={36} $ml={7}><Wifi size={26} strokeWidth={2} /></TraySlot>
          <TraySlot $w={34}><Volume2 size={26} strokeWidth={1.6} /></TraySlot>
          <TraySlot $w={40}><BatteryIcon /></TraySlot>
          <TwoLine $w={102} $align="flex-end" $pr={4}><span>12:02 AM</span><span>8/27/2025</span></TwoLine>
          <NotifPill>11</NotifPill>
        </Tray>
      </Taskbar>
    </Screen>
  );
}
